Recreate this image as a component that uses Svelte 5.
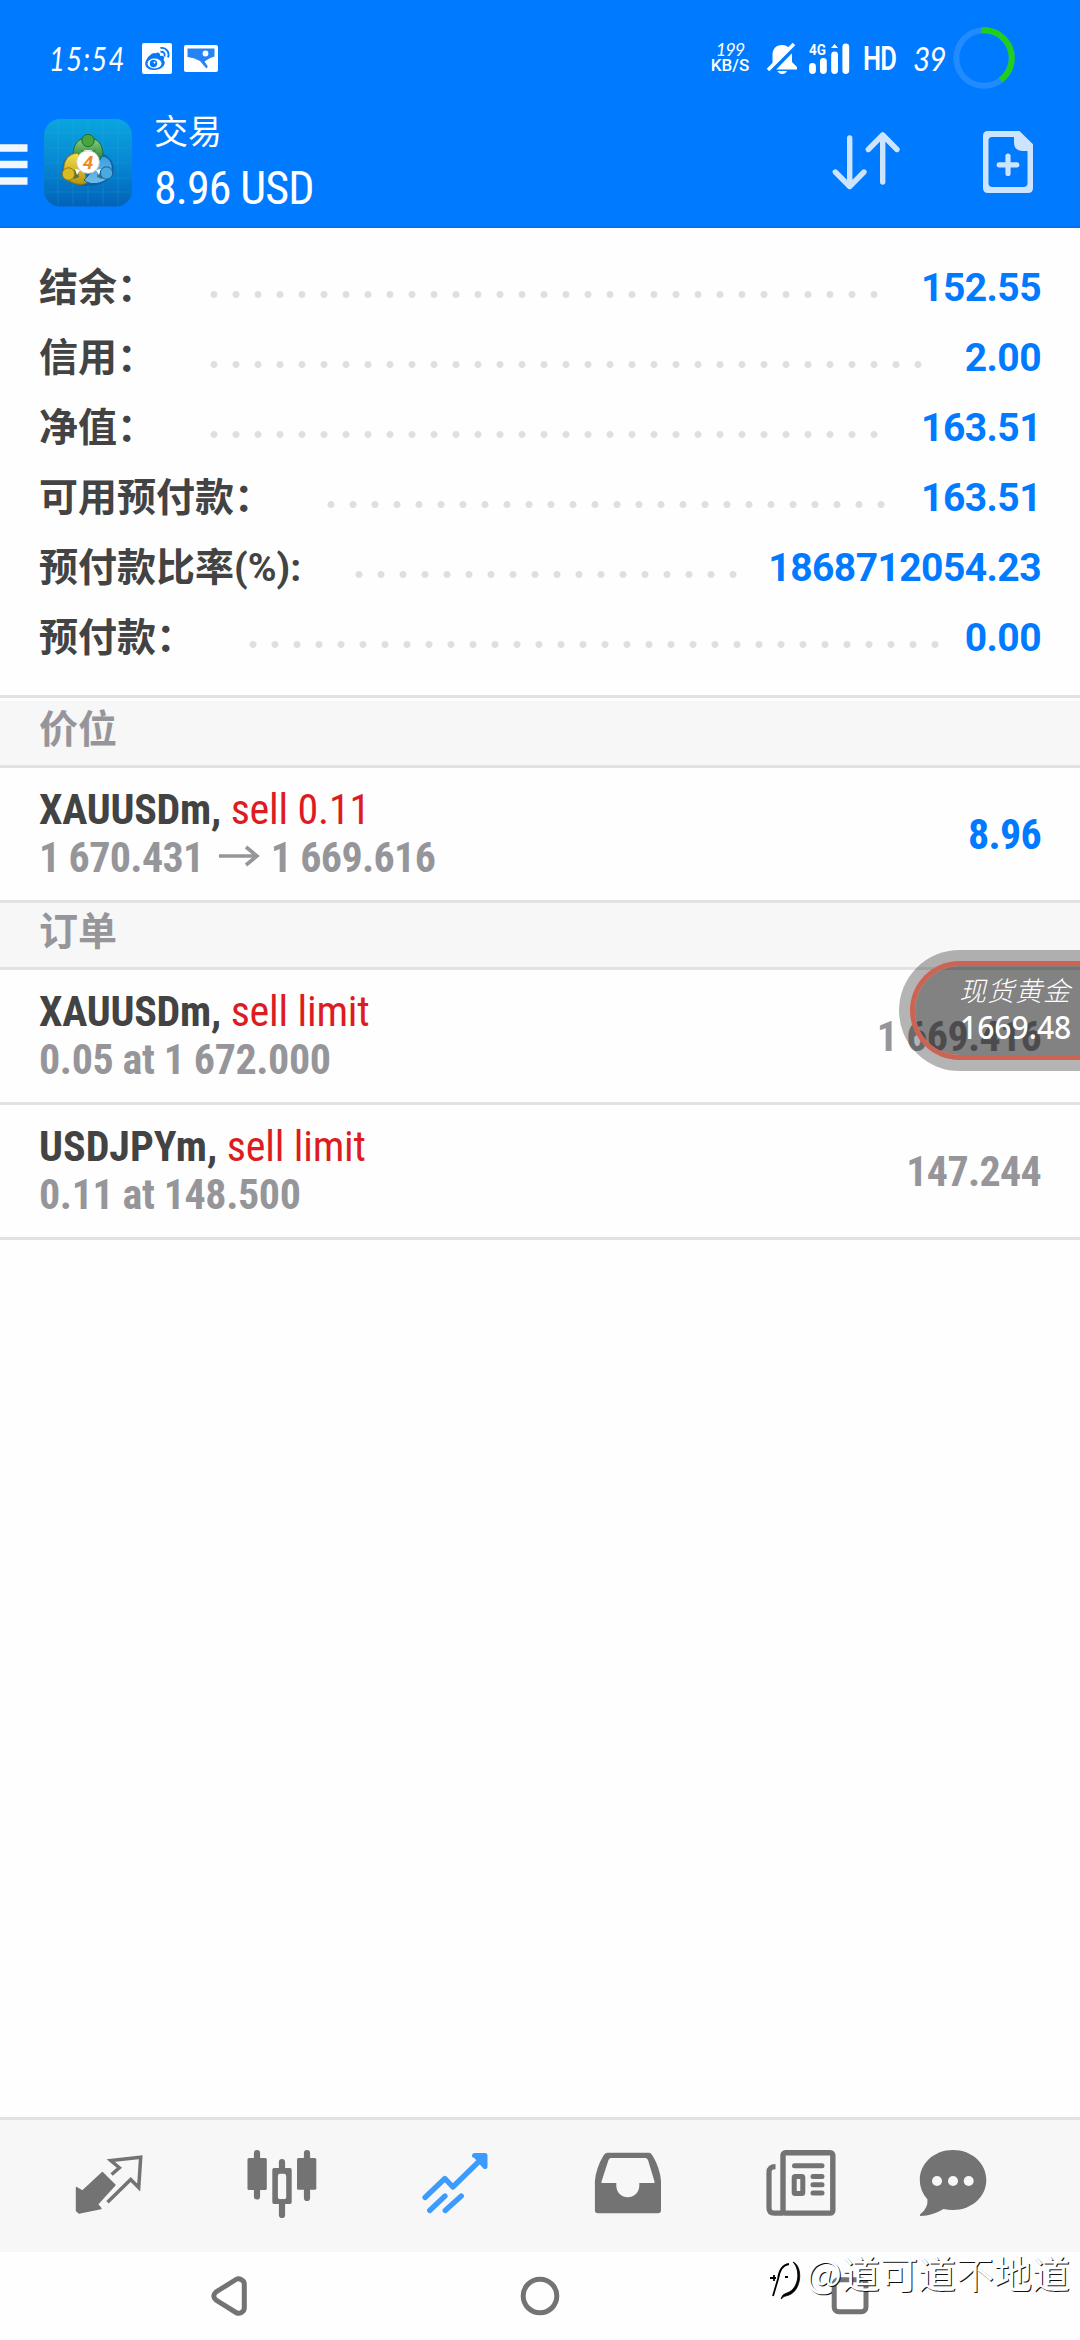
<script>
  const account = [
    { label: '结余：', value: '152.55', dots: 31 },
    { label: '信用：', value: '2.00', dots: 33 },
    { label: '净值：', value: '163.51', dots: 31 },
    { label: '可用预付款：', value: '163.51', dots: 26 },
    { label: '预付款比率(%):', value: '1868712054.23', dots: 18 },
    { label: '预付款：', value: '0.00', dots: 32 },
  ];
  const positions = [
    { symbol: 'XAUUSDm,', side: 'sell 0.11', from: '1 670.431', to: '1 669.616', value: '8.96', profit: true, tight: true },
  ];
  const orders = [
    { symbol: 'XAUUSDm,', side: 'sell limit', from: '0.05 at 1 672.000', value: '1 669.416', tight: true },
    { symbol: 'USDJPYm,', side: 'sell limit', from: '0.11 at 148.500', value: '147.244' },
  ];
</script>

{#snippet deal(d)}
  <div class="deal">
    <div class="info">
      <div class="line"><span class="cond"><b class:tight={d.tight}>{d.symbol}</b> <span class="side">{d.side}</span></span></div>
      <div class="line grey" class:quoted={d.to}>
        <span class="cond">{d.from}{#if d.to}<svg class="arrow" width="40" height="22" viewBox="0 0 40 22"><path d="M0 11H38M27 2L38 11L27 20" fill="none" stroke="#96969a" stroke-width="3.600" /></svg>{d.to}{/if}</span>
      </div>
    </div>
    <div class="amount cond" class:profit={d.profit}>{d.value}</div>
  </div>
{/snippet}

<div class="screen">
  <header>
    <div class="status">
      <span class="time">15:54</span>
      <svg class="weibo" width="30" height="31" viewBox="0 0 30 31">
        <rect width="30" height="31" rx="2" fill="#fff" />
        <path d="M13.500 10.500C15 8.500 19 9.500 18 13C21 12 23.500 14 21.500 17C25 20 21 26.500 13 27C5 27.500 1.500 22 4 17.500C6 13.500 11 8.500 13.500 10.500Z" fill="#0a78f5" />
        <ellipse cx="12.500" cy="20.500" rx="7" ry="5" fill="#fff" />
        <circle cx="11.500" cy="20.500" r="3.700" fill="#0a78f5" /><circle cx="12.500" cy="19.500" r="1" fill="#fff" />
        <path d="M18.500 8.800C21.500 8.500 23.500 10.500 22.500 13.500M18.500 5C24 4 28 9 26 14.500" fill="none" stroke="#0a78f5" stroke-width="1.900" />
      </svg>
      <svg class="pic" width="34" height="27" viewBox="0 0 34 27">
        <rect width="34" height="27" rx="2" fill="#fff" />
        <path d="M3.500 3.500H30.500V11.500Q26 12.500 20.500 16.500L23.800 21.500L22.500 23.500Q19 20 17 17C13 13.500 8 13 3.500 12Z" fill="#2583f5" />
        <circle cx="21.500" cy="8.500" r="2.900" fill="#fff" />
      </svg>
      <div class="speed"><span class="hand">199</span><span class="unit">KB/S</span></div>
      <svg class="bell" width="31" height="31" viewBox="0 0 31 31">
        <path d="M15 2C22 2 25 7 25 13V19L30 24V26.500H1L5.500 20V12C5.500 6 9 2 15 2Z" fill="#fff" />
        <path d="M10.500 28H20Q18.500 31 15.200 31T10.500 28Z" fill="#fff" />
        <path d="M3 30L29 3" stroke="#007aff" stroke-width="4" />
        <path d="M1 27L27 1" stroke="#fff" stroke-width="3.600" />
      </svg>
      <svg class="signal" width="41" height="31" viewBox="0 0 41 31">
        <text class="net" x="0" y="12" textLength="17" lengthAdjust="spacingAndGlyphs">4G</text>
        <path d="M3.500 23.500V27.500M14.400 18.500V27.500M25.600 12V27.500M36.800 4V27.500" stroke="#fff" stroke-width="6.800" stroke-linecap="round" />
        <path d="M25.600 1L29 5H22Z" fill="#fff" />
      </svg>
      <span class="hd">HD</span>
      <span class="hand batt">39</span>
      <svg class="ring" width="62" height="62" viewBox="0 0 62 62">
        <circle cx="31" cy="31" r="27.700" fill="none" stroke="#fff" stroke-opacity=".13" stroke-width="6" />
        <path d="M28.500 3.400A27.700 27.700 0 0 1 47.600 53.200" fill="none" stroke="#1fce1f" stroke-width="6" />
      </svg>
    </div>

    <div class="bar">
      <svg class="menu" width="28" height="42" viewBox="0 0 28 42"><path d="M0 5H27.500M0 21.500H27.500M0 38H27.500" stroke="#f2f7ff" stroke-width="7.400" /></svg>
      <svg class="app" width="88" height="88" viewBox="0 0 88 88">
        <defs>
          <linearGradient id="bg" x1="0" y1="0" x2="0" y2="1"><stop offset="0" stop-color="#0aa5df" /><stop offset=".5" stop-color="#0788d2" /><stop offset="1" stop-color="#0262b8" /></linearGradient>
          <linearGradient id="gr" x1="0" y1="0" x2="0" y2="1"><stop offset="0" stop-color="#8fd07a" /><stop offset="1" stop-color="#1d7f38" /></linearGradient>
          <linearGradient id="ye" x1="0" y1="0" x2="0" y2="1"><stop offset="0" stop-color="#f2e04c" /><stop offset="1" stop-color="#b79410" /></linearGradient>
          <linearGradient id="bl" x1="0" y1="0" x2="0" y2="1"><stop offset="0" stop-color="#3b9ede" /><stop offset="1" stop-color="#6fbdea" /></linearGradient>
        </defs>
        <rect width="88" height="87.500" rx="16" fill="url(#bg)" />
        <path d="M14 1V86M29 1V86M44 1V86M59 1V86M74 1V86M1 14H87M1 29H87M1 44H87M1 59H87M1 73H87" stroke="#2fc0e0" stroke-opacity=".2" stroke-width="1" />
        <ellipse cx="44" cy="49" rx="26" ry="18" fill="#003a70" opacity=".3" />
        <path d="M29 37C29 23 36 19 44 19S59 23 59 37L56 42H33Z" fill="url(#gr)" stroke="#166b3a" />
        <path d="M20 54C18 42 25 34 34 34L40 46L43 64C37 67 27 65 22 59Z" fill="url(#ye)" stroke="#8a7412" />
        <path d="M68 54C70 42 63 37 58 37L52 48L40 61C46 67 58 65 65 59Z" fill="url(#bl)" stroke="#14589c" />
        <path d="M36 30C38 34 50 34 52 30L49 36H40ZM27 50L34 52L35 58L30 60ZM61 50L54 52L53 58L58 60Z" fill="#174f4a" opacity=".6" />
        <path d="M40 31H48L44 35ZM31 50L36 51L33 56ZM57 50L52 51L55 56Z" fill="#fff" />
        <circle cx="44" cy="21.500" r="6.200" fill="#4aa33f" stroke="#1e6f35" />
        <circle cx="24.500" cy="55" r="6.200" fill="#d9bb23" stroke="#96770e" />
        <circle cx="62.500" cy="54" r="6.200" fill="#4aa9df" stroke="#175c9e" />
        <circle cx="44" cy="43" r="11.300" fill="#fff" stroke="#d8d4c8" />
        <text class="four" x="44" y="49.500" text-anchor="middle">4</text>
      </svg>
      <div class="title">
        <span class="name">交易</span>
        <span class="total cond">8.96 USD</span>
      </div>
      <svg class="sort" width="70" height="64" viewBox="0 0 70 64">
        <path d="M18.700 9V57M4.300 43L18.700 57.500L33 43M51.700 53V6M37.300 20.500L51.700 6L66 20.500" fill="none" stroke="#cce4ff" stroke-width="5.400" stroke-linecap="round" stroke-linejoin="round" />
      </svg>
      <svg class="doc" width="50" height="62" viewBox="0 0 50 62">
        <path fill-rule="evenodd" d="M5 0H36.500L50 13.300V57Q50 62 45 62H5Q0 62 0 57V5Q0 0 5 0ZM9 6Q5.500 6 5.500 9.500V52Q5.500 56 9.500 56H40.500Q44.500 56 44.500 52V20H39Q31 19 31 12V6Z" fill="#cce4ff" />
        <path d="M25 25V42.500M16.200 33.800H33.800" stroke="#cce4ff" stroke-width="5.200" stroke-linecap="round" />
      </svg>
    </div>
  </header>

  <section class="account">
    {#each account as row}
      <div class="row">
        <span class="label">{row.label}</span>
        <span class="dots" style="width: {row.dots * 22}px"></span>
        <span class="value">{row.value}</span>
      </div>
    {/each}
  </section>

  <h2 class="first">价位</h2>
  {#each positions as d}{@render deal(d)}{/each}
  <h2>订单</h2>
  {#each orders as d}{@render deal(d)}{/each}

  <div class="float">
    <div class="pill">
      <span class="metal">现货黄金</span>
      <span class="quote">1669.48</span>
    </div>
  </div>

  <footer>
    <nav class="tabs">
      <svg viewBox="0 0 72 72">
        <path d="M3.500 39.500L9.500 43L29.400 24.500L42 37L24.500 56.300L28 60.500L6 65L3.500 62.700Z" fill="#737373" stroke="#737373" stroke-width="1.400" stroke-linejoin="round" />
        <path d="M38.600 26.500L46.300 19.700L37.800 12.500L67.700 9.200L65.700 39.500L57.700 31.500L34.500 54.300" fill="none" stroke="#737373" stroke-width="3.500" />
      </svg>
      <svg viewBox="0 0 72 72">
        <path d="M11 5V48.500M61 5V50M36 14V22M36 54V67" stroke="#737373" stroke-width="6.200" stroke-linecap="round" />
        <rect x="1.500" y="10" width="19.300" height="32" rx="1.500" fill="#737373" /><rect x="51" y="10" width="19.300" height="31.700" rx="1.500" fill="#737373" />
        <path fill-rule="evenodd" d="M28 20H44Q45.700 20 45.700 22V54Q45.700 56 44 56H28Q26.300 56 26.300 54V22Q26.300 20 28 20ZM34 25.700Q31.900 25.700 31.900 28V49Q31.900 51.300 34 51.300H38Q40.200 51.300 40.200 49V28Q40.200 25.700 38 25.700Z" fill="#737373" />
      </svg>
      <svg viewBox="0 0 72 72">
        <path d="M6 49.500L25.900 30.500L33.800 39L65 8.500M10.700 62.500L26 48M26.200 62.500L42.300 48" fill="none" stroke="#3d9bff" stroke-width="5.300" stroke-linecap="round" stroke-linejoin="round" />
        <path d="M55.500 7.500H66V18.500L57 8Z" fill="#3d9bff" stroke="#3d9bff" stroke-width="5" stroke-linejoin="round" />
      </svg>
      <svg viewBox="0 0 72 72">
        <path fill-rule="evenodd" d="M15.600 4.700H57Q59 4.700 60.500 7.500Q68 20 69 33V62Q69 65.300 66 65.300H6Q2.900 65.300 2.900 62V33Q4 20 11.500 7.500Q13 4.700 15.600 4.700ZM19 10Q17.300 10 16.500 12L9.500 33.500V35H24.300V37.500C24.300 53 47.300 53 47.300 37.500V35H62.500V33.500L56 12Q55 10 53.500 10Z" fill="#737373" />
      </svg>
      <svg viewBox="0 0 72 72">
        <rect x="18" y="4.700" width="49.800" height="60.400" rx="2.500" fill="none" stroke="#737373" stroke-width="5.400" />
        <path d="M10.500 18.700Q4 18.700 4 24V60Q4 65.200 9.500 65.200H18" fill="none" stroke="#737373" stroke-width="5.200" />
        <path d="M29.500 17.700H57M48 28.500H57M48 36.700H57M48 45H57" stroke="#737373" stroke-width="5" stroke-linecap="round" />
        <rect x="29.200" y="28.600" width="8.600" height="17" rx="1" fill="none" stroke="#737373" stroke-width="5" />
      </svg>
      <svg viewBox="0 0 72 72">
        <path d="M36 2C55 2 69.300 15.500 69.300 32S55 62 36 62Q31 62 26.500 61Q16 67.500 3.500 68Q2 67 4 65.500Q11 60 10.500 51.500Q2.800 43 2.800 32C2.800 15.500 17 2 36 2Z" fill="#737373" />
        <circle cx="20" cy="33" r="5" fill="#f7f7f7" /><circle cx="36" cy="33" r="5" fill="#f7f7f7" /><circle cx="51.700" cy="33" r="5" fill="#f7f7f7" />
      </svg>
    </nav>
    <div class="system">
      <svg width="44" height="44" viewBox="0 0 44 44"><path d="M33 5.500Q36.300 7 36.300 10V34Q36.300 37 33 38.800Q30.500 40 28 38.500L8 26Q3.500 22 8 18L28 5.500Q30.500 4 33 5.500Z" fill="none" stroke="#737373" stroke-width="5" /></svg>
      <svg width="44" height="44" viewBox="0 0 44 44"><circle cx="22" cy="22" r="16.800" fill="none" stroke="#737373" stroke-width="5" /></svg>
      <svg width="44" height="44" viewBox="0 0 44 44"><rect x="6.200" y="5.700" width="31.800" height="32" rx="4.500" fill="none" stroke="#737373" stroke-width="5" /></svg>
    </div>
    <div class="mark">
      <svg width="38" height="46" viewBox="0 0 38 46">
        <path d="M5 38L10 21Q12 7 21 6M2 20H8M6 17V23M17 19H20" fill="none" stroke="#000" stroke-width="1.800" />
        <path d="M25 4C35 8 34 32 21 37Q15 38 13 41Q14 36 19 35C31 31 33 12 25 4Z" fill="#000" stroke="#000" stroke-width=".8" />
      </svg>
      <span>@道可道不地道</span>
    </div>
  </footer>
</div>

<style>
  :global(body) { margin: 0; background: #fff; }
  .screen {
    position: relative; width: 1080px; height: 2340px; overflow: hidden; display: flex; flex-direction: column;
    background: #fefefe; font-family: Roboto, "Noto Sans CJK SC", sans-serif; color: #434343;
  }
  svg { display: block; flex: none; overflow: visible; }
  .cond { display: inline-block; white-space: pre; font-family: "Roboto Condensed", Roboto, sans-serif; font-stretch: 75%; }

  header { box-sizing: border-box; height: 228px; background: #007aff; border-bottom: 2px solid #0070f0; color: #fff; }
  .status { display: flex; align-items: center; height: 116px; padding-left: 49px; }
  .time, .hand { font-family: Lato, sans-serif; font-style: italic; font-weight: 400; }
  .time { width: 93px; font-size: 33px; letter-spacing: 1.500px; transform: scaleX(.83); transform-origin: 0 50%; }
  .pic { margin-left: 12px; }
  .speed { width: 44px; margin-left: 490px; display: flex; flex-direction: column; align-items: center; font-size: 17px; line-height: 15px; }
  .speed .hand { letter-spacing: -1px; font-size: 18px; line-height: 14px; }
  .unit { font-weight: 500; line-height: 18px; }
  .bell { margin-left: 15px; }
  .signal { margin-left: 11px; }
  .net { font-size: 15px; font-weight: 700; fill: #fff; }
  .hd { width: 50px; margin-left: 13px; font-size: 34px; font-weight: 600; letter-spacing: -1px; transform: scaleX(.75); transform-origin: 0 50%; }
  .batt { width: 43px; font-size: 33px; letter-spacing: -1px; transform: scaleX(.9); transform-origin: 0 50%; }
  .ring { margin-left: -3px; }

  .bar { display: flex; height: 110px; align-items: flex-start; }
  .menu { margin-top: 27px; }
  .app { margin: 3px 0 0 16px; }
  .four { font: italic 700 19px Roboto, sans-serif; fill: #f08a24; }
  .title { display: flex; flex-direction: column; width: 676px; padding-left: 22px; box-sizing: border-box; }
  .name { font-size: 34px; line-height: 32px; }
  .total { font-size: 46px; line-height: 56px; margin-top: 12px; letter-spacing: -.900px; }
  .sort { margin: 13px 0 0 23px; }
  .doc { margin: 15px 0 0 82px; }

  .account { padding: 24px 39px 23px; }
  .row { display: flex; align-items: center; height: 70px; font-size: 39px; line-height: 70px; font-weight: 700; }
  .label, .value { padding-top: 2px; }
  .label { white-space: pre; }
  .dots { height: 7px; margin: 14px 0 0 47px; flex: none; background: radial-gradient(circle at 11px 3.500px, #dfdfdf 3px, transparent 4px) 0 0 / 22px 7px repeat-x; }
  .value { margin-left: auto; color: #007aff; letter-spacing: -.550px; }

  h2 { box-sizing: border-box; height: 70px; margin: 0; padding-left: 39px; border: solid #e2e2e2; border-width: 3px 0; background: #f7f7f7; color: #96969a; font-size: 39px; font-weight: 700; line-height: 58px; }
  h2.first { height: 73px; line-height: 64px; box-shadow: inset 0 3px #fefefe; }
  .deal { display: flex; justify-content: space-between; align-items: center; height: 132px; padding: 0 39px; border-bottom: 3px solid #e2e2e2; font-size: 42px; }
  .deal:has(+ h2) { border-bottom: 0; }
  .line { height: 48px; line-height: 48px; white-space: nowrap; }
  .tight { letter-spacing: -.250px; }
  .side { color: #dd1c22; letter-spacing: -.180px; }
  .grey { color: #96969a; font-weight: 700; letter-spacing: -.400px; }
  .grey.quoted { letter-spacing: -.650px; }
  .arrow { display: inline-block; margin: 0 12px 0 15px; vertical-align: 5px; }
  .amount { font-weight: 700; color: #96969a; letter-spacing: -.700px; }
  .amount.profit { color: #007aff; }

  .float { position: absolute; left: 899px; top: 950px; box-sizing: border-box; width: 181px; height: 121px; padding: 11px 0 11px 11px; border-radius: 61px 0 0 61px; background: rgba(0, 0, 0, .29); }
  .pill { box-sizing: border-box; width: 170px; height: 99px; padding: 6px 9px 0 0; border: 5px solid #cc6455; border-right: 0; border-radius: 50px 0 0 50px; background: rgba(0, 0, 0, .28); background-clip: padding-box; color: #fff; display: flex; flex-direction: column; align-items: flex-end; }
  .metal { font-family: "Noto Sans CJK SC", sans-serif; font-weight: 300; font-style: italic; font-size: 27px; letter-spacing: 1px; line-height: 36px; }
  .quote { font: 500 33px/38px "Noto Sans", sans-serif; transform: scaleX(.91); transform-origin: 100% 50%; }

  footer { position: relative; margin-top: auto; height: 223px; }
  .tabs { box-sizing: border-box; display: grid; grid-template-columns: repeat(5, 173.200px) 130px; justify-items: center; align-content: start; height: 135px; padding: 28px 0 0 22px; border-top: 3px solid #e2e2e2; background: #f7f7f7; }
  .tabs svg { width: 72px; height: 72px; }
  .system { display: grid; grid-template-columns: repeat(3, 310px); justify-content: center; justify-items: center; padding-top: 22px; }
  .mark { position: absolute; right: 10px; bottom: 43px; display: flex; align-items: center; height: 50px; color: #fff; font: 400 38px/50px "Noto Sans CJK SC", sans-serif; text-shadow: 1px 1px 0 #111; }
  .mark svg { margin-top: 18px; }
</style>
